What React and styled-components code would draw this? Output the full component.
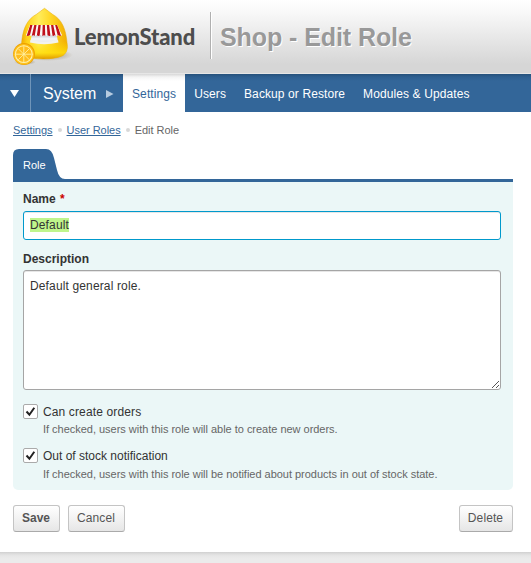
import React from 'react';
import styled, { createGlobalStyle } from 'styled-components';

const Global = createGlobalStyle`
  * { box-sizing: border-box; }
  body { margin: 0; background: #fff; font: 12px/16px "Liberation Sans", Arial, sans-serif; color: #333; overflow: hidden; }
  button, input, textarea { font-family: inherit; }
`;

const Page = styled.div`
  display: flex;
  flex-direction: column;
  height: 563px;
`;

const Header = styled.header`
  display: flex;
  align-items: flex-start;
  height: 74px;
  flex: none;
  background: linear-gradient(#fff 0%, #f9f9f9 16%, #d6d6d6 88%, #d6d6d6 100%);
  border-bottom: 1px solid #e6e6e6;
`;

const LogoMark = styled.svg`
  width: 74px;
  height: 72px;
  flex: none;
`;

const Wordmark = styled.div`
  width: 136px;
  padding-top: 22px;
  font: 900 22px/30px Lato, sans-serif;
  letter-spacing: -0.16px;
  color: #4d4d4d;
`;

const HeaderRule = styled.div`
  width: 2px;
  height: 47px;
  margin-top: 12px;
  background: linear-gradient(90deg, #b0b0b0 50%, #fff 50%);
`;

const Title = styled.h1`
  margin: 22px 0 0 8px;
  font-size: 25px;
  line-height: 30px;
  letter-spacing: -0.08px;
  color: #999;
  text-shadow: 1px 1px 0 #fff;
  white-space: nowrap;
`;

const Nav = styled.nav`
  display: flex;
  height: 38px;
  flex: none;
  background: linear-gradient(#26517b 0, #2e5f90 3px, #336699 7px);
`;

const MenuToggle = styled.div`
  width: 31px;
  padding: 16px 0 0 10px;
  border-right: 1px solid #7095b9;
  line-height: 0;
`;

const Section = styled.div`
  display: flex;
  gap: 10px;
  width: 92px;
  padding-left: 12px;
  font-size: 16px;
  line-height: 39px;
  color: #fff;
  svg { margin-top: 16px; flex: none; }
`;

const NavItem = styled.a`
  padding: 0 9px;
  line-height: 40px;
  letter-spacing: 0.1px;
  white-space: nowrap;
  color: ${p => (p.$active ? '#336699' : '#fff')};
  background: ${p => (p.$active ? 'linear-gradient(#d8d8d8 0, #f4f4f4 3px, #fff 7px)' : 'none')};
`;

const Crumbs = styled.div`
  display: flex;
  align-items: center;
  gap: 5px;
  height: 37px;
  padding: 0 13px;
  font-size: 11px;
  letter-spacing: -0.03px;
  line-height: 14px;
  padding-bottom: 1px;
  color: #666;
  a { color: #336699; text-decoration: underline; }
`;

const Dot = styled.i`
  width: 4px;
  height: 4px;
  border-radius: 50%;
  background: #d8d8d8;
`;

const TabStrip = styled.div`
  display: flex;
  width: 500px;
  height: 33px;
  margin-left: 13px;
  border-bottom: 3px solid #336699;
`;

const Tab = styled.div`
  display: grid;
  width: 54px;
  font-size: 11px;
  line-height: 32px;
  color: #fff;
  svg, span { grid-area: 1 / 1; }
  span { padding-left: 10px; z-index: 1; }
`;

const Panel = styled.section`
  display: flex;
  flex-direction: column;
  width: 500px;
  height: 308px;
  margin-left: 13px;
  padding: 9px 12px 0 10px;
  background: #ebf7f7;
  border-radius: 0 0 5px 5px;
`;

const Label = styled.label`
  font-weight: bold;
  line-height: 16px;
  em { margin-left: 1px; color: #c00; font-style: normal; }
`;

const Field = styled.div`
  width: 478px;
  height: ${p => p.$height}px;
  margin-top: ${p => p.$before}px;
  margin-bottom: ${p => p.$after}px;
  padding: ${p => p.$top}px 6px 0;
  border: 1px solid ${p => (p.$focused ? '#0099cc' : '#a5a5a5')};
  border-radius: 3px;
  background: #fff;
  box-shadow: inset 0 1px 0 #e6e6e6;
  line-height: 14px;
  letter-spacing: 0.14px;
  display: flex;
  justify-content: space-between;
  svg { align-self: flex-end; margin: 0 -6px 0 0; }
`;

const Selected = styled.span`
  height: 14px;
  background: #bff58c;
`;

const CheckRow = styled.div`
  display: flex;
  gap: 5px;
  height: ${p => p.$height}px;
`;

const Checkbox = styled.div`
  display: flex;
  flex: none;
  width: 15px;
  height: 15px;
  border: 1px solid #aaa;
  border-radius: 2px;
  background: #fff;
`;

const CheckText = styled.div`
  white-space: nowrap;
  line-height: 16px;
  letter-spacing: ${p => p.$spacing || 0}px;
`;

const Hint = styled.div`
  margin-top: ${p => p.$top}px;
  font-size: 11px;
  line-height: 16px;
  letter-spacing: -0.02px;
  color: #666;
`;

const Actions = styled.div`
  display: flex;
  gap: 8px;
  height: 62px;
  width: 513px;
  padding: 15px 0 0 13px;
`;

const Button = styled.button`
  width: ${p => p.$width}px;
  height: 27px;
  margin-left: ${p => (p.$end ? 'auto' : '0')};
  padding: 0 1px 1px 0;
  border: 1px solid #c4c4c4;
  border-bottom-color: #aaa;
  border-radius: 3px;
  background: linear-gradient(#fff, #e6e6e6);
  font-size: 12px;
  font-weight: ${p => (p.$bold ? 700 : 400)};
  letter-spacing: ${p => (p.$bold ? 0 : 0.1)}px;
  color: #555;
`;

const Footer = styled.footer`
  flex: 1;
  background: linear-gradient(#d0d0d0 0, #dedede 2px, #e7e7e7 4px, #ebebeb 7px);
`;

const DOME = 'M44.500 8.300C41.500 10 39.500 12.500 36.500 14.300 27.500 19 23.500 28 22 39 20.800 50 21 53 24 55.500c8 4.500 31 4.500 39 0 4-3 5-7 4-13C65.800 29 62 19.500 52.500 14.300c-3-1.800-5-4.300-8-6z';

const Lemon = () => (
  <LogoMark viewBox="0 0 74 72">
    <defs>
      <linearGradient id="body" x1="0" x2="1">
        <stop offset="0" stopColor="#f0a800" />
        <stop offset=".13" stopColor="#ffd21c" />
        <stop offset=".38" stopColor="#ffec5a" />
        <stop offset=".62" stopColor="#ffd829" />
        <stop offset="1" stopColor="#f2ad00" />
      </linearGradient>
      <linearGradient id="base" x1="0" y1="0" x2="0" y2="1">
        <stop offset=".65" stopColor="#ffdf00" stopOpacity="0" />
        <stop offset=".88" stopColor="#ffde0a" stopOpacity=".8" />
        <stop offset="1" stopColor="#e09a00" />
      </linearGradient>
      <linearGradient id="counter" x1="0" y1="0" x2="0" y2="1">
        <stop offset="0" stopColor="#b9bdc7" />
        <stop offset=".5" stopColor="#f4f5f8" />
        <stop offset="1" stopColor="#dfe2e6" />
      </linearGradient>
      <radialGradient id="shade">
        <stop offset="0" stopColor="#6d571a" stopOpacity=".65" />
        <stop offset="1" stopColor="#857240" stopOpacity="0" />
      </radialGradient>
      <clipPath id="awning">
        <path d="M30 25h27l5 10q-1.500 2-3.600 0-1.800 2-3.600 0-1.800 2-3.600 0-1.800 2-3.600 0-1.800 2-3.600 0-1.800 2-3.600 0-1.800 2-3.600 0-1.800 2-3.600 0-1.800 2-3.600 0-1.800 2-3.600 0z" />
      </clipPath>
    </defs>
    <ellipse cx="48" cy="55" rx="25" ry="6" fill="url(#shade)" />
    <ellipse cx="25" cy="62" rx="11" ry="3" fill="url(#shade)" />
    <path d={DOME} fill="url(#body)" stroke="#e7aa0b" strokeWidth=".5" />
    <path d={DOME} fill="url(#base)" />
    <path d="M32 34h24.500l1.500 7.500q-14 4-27.500 0z" fill="url(#counter)" />
    <path d="M30.500 40q14 3.500 27.500 0l.5 2.500q-14 3.500-28.500 0z" fill="#f2f2ee" />
    <g clipPath="url(#awning)">
      <path d="M25 24h38v14H25z" fill="#faf7f6" />
      <path d="M30.500 24h2.200l-3.200 13h-3.200zM34.500 24h2.200l-2.200 13h-3zM38.600 24h2.200l-1.200 13h-3zM42.700 24h2.200l.4 13h-3zM46.800 24h2.200l1.600 13h-3zM50.900 24h2.200l2.600 13h-3zM54.900 24h2.200l4.200 13h-3.200z" fill="#c0101b" />
    </g>
    <circle cx="24" cy="54" r="10.900" fill="#eda000" />
    <circle cx="23.800" cy="54.200" r="10.200" fill="#ffc31d" />
    <circle cx="23.800" cy="54.200" r="8.900" fill="#fff2b4" />
    <circle cx="23.800" cy="54.200" r="7.900" fill="#ffbd1d" />
    <path d="M23.800 46.300v15.800M15.900 54.200h15.800M18.200 48.600l11.200 11.200M29.400 48.600L18.200 59.800" stroke="#fff0a3" strokeWidth=".9" />
  </LogoMark>
);

const Check = () => (
  <svg width="13" height="13" viewBox="0 0 13 13">
    <path d="M2.500 6.500l2.900 3.200L10.300 2.700" fill="none" stroke="#222" strokeWidth="2" />
  </svg>
);

const Option = ({ label, hint, height, top, spacing }) => (
  <CheckRow $height={height}>
    <Checkbox><Check /></Checkbox>
    <CheckText $spacing={spacing}>{label}<Hint $top={top}>{hint}</Hint></CheckText>
  </CheckRow>
);

export default function App() {
  return (
    <Page>
      <Global />
      <Header>
        <Lemon />
        <Wordmark>LemonStand</Wordmark>
        <HeaderRule />
        <Title>Shop - Edit Role</Title>
      </Header>
      <Nav>
        <MenuToggle><svg width="9" height="8"><path d="M0 0h9L4.500 7z" fill="#fff" /></svg></MenuToggle>
        <Section>System<svg width="8" height="8"><path d="M0 0l7.500 4L0 8z" fill="#b6cbe0" /></svg></Section>
        <NavItem $active>Settings</NavItem>
        <NavItem>Users</NavItem>
        <NavItem>Backup or Restore</NavItem>
        <NavItem>Modules &amp; Updates</NavItem>
      </Nav>
      <Crumbs><a>Settings</a><Dot /><a>User Roles</a><Dot /><span>Edit Role</span></Crumbs>
      <TabStrip>
        <Tab>
          <svg width="54" height="30"><path d="M0 30V6q0-6 6-6h27q6 0 8 9l3 12q2 9 8 9z" fill="#336699" /></svg>
          <span>Role</span>
        </Tab>
      </TabStrip>
      <Panel>
        <Label>Name <em>*</em></Label>
        <Field $focused $height={29} $before={4} $top={6} $after={11}><Selected>Default</Selected></Field>
        <Label>Description</Label>
        <Field $height={120} $before={3} $top={8} $after={14}>
          Default general role.
          <svg width="9" height="9"><path d="M1 8l7-7M5 8l3-3" stroke="#555" strokeWidth="1" /></svg>
        </Field>
        <Option height={44} top={1} spacing={0.13} label="Can create orders" hint="If checked, users with this role will able to create new orders." />
        <Option height={42} top={2} label="Out of stock notification" hint="If checked, users with this role will be notified about products in out of stock state." />
      </Panel>
      <Actions>
        <Button $width={47} $bold>Save</Button>
        <Button $width={57}>Cancel</Button>
        <Button $width={54} $end>Delete</Button>
      </Actions>
      <Footer />
    </Page>
  );
}
